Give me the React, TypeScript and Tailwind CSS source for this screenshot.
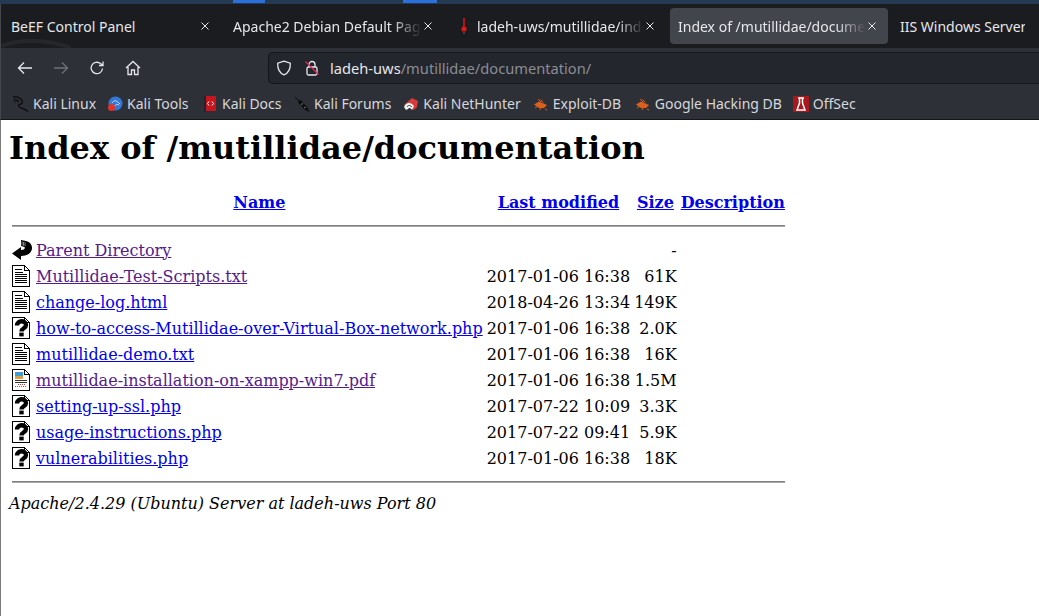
import React from "react";

const Tab = ({ title, icon, w, active, noClose, fade }: { title: string; icon?: React.ReactNode; w: string; active?: boolean; noClose?: boolean; fade?: boolean }) => (
  <div className={`${w} h-9 flex items-center rounded pl-2 pr-[11px] shrink-0 relative ${active ? "bg-[#43454c]" : ""}`}>
    {icon}
    <span className="text-[14px] text-[#e6e7ea] whitespace-nowrap overflow-hidden flex-1" style={fade ? { maskImage: "linear-gradient(to right, black 84%, transparent 100%)" } : undefined}>{title}</span>
    {!noClose && (
      <svg width="10" height="10" viewBox="0 0 10 10" className="shrink-0 ml-[1px]" stroke="#e6e7ea" strokeWidth="1"><path d="M1.500 1.500l7 7M8.500 1.500l-7 7" /></svg>
    )}
  </div>
);

const Bookmark = ({ label, icon, labelClass = "" }: { label: string; icon: React.ReactNode; labelClass?: string }) => (
  <div className="flex items-center gap-[4px] shrink-0">
    <span className="w-4 h-4 flex items-center justify-center">{icon}</span>
    <span className={`text-[14px] text-[#d6d7db] whitespace-nowrap ${labelClass}`}>{label}</span>
  </div>
);

const Dragon = () => (
  <svg width="16" height="16" viewBox="0 0 16 16" fill="none" stroke="#0c0c0c" strokeWidth="1.300"><path d="M0 1c3-.5 6 0 8 2 2 2 2 4.500 0 5-2 .5-3 1-2 2.500 1 1.500 5 2 9 5" /><path d="M1 3.500c2 0 3.500.5 5 2.500" /><path d="M0 5.500c1 0 2 .5 3 1.500" strokeWidth="0.800" /></svg>
);
const Bug = () => (
  <svg width="16" height="16" viewBox="0 0 16 16"><path d="M1 8.500l5-3 8 3.500-3 3H6z" fill="#d9601e" /><path d="M5 3l3 3M8 3.500l2 3M2 12l3-2M12 13l2 1M7 14l1-2" stroke="#d9601e" /></svg>
);
const Needle = () => (
  <svg width="16" height="16" viewBox="0 0 16 16" fill="none"><path d="M1 1l4 4" stroke="#0d0d0d" strokeWidth="1" /><path d="M5 5l8 8.500" stroke="#0d0d0d" strokeWidth="3.400" /><path d="M7 8.500l2-1M10 12l2-1" stroke="#999" strokeWidth="0.800" /><path d="M13 13.500l2 2" stroke="#0d0d0d" strokeWidth="1.500" /></svg>
);

const Page = ({ children }: { children?: React.ReactNode }) => (
  <svg width="20" height="22" viewBox="0 0 20 22" shapeRendering="crispEdges" className="block">
    <path d="M0.500 0.500H12.500L17.500 5.500V21.500H0.500Z" fill="#fff" stroke="#000" />
    <path d="M1 21H18M17 6V21" stroke="#000" strokeOpacity="0.600" />
    <path d="M12.500 0.500V5.500H17.500" fill="none" stroke="#000" />
    {children}
  </svg>
);
const TextIcon = () => (
  <Page>
    <path d="M3 4.500H10M3 7.500H11M3 9.500H15M3 11.500H15M3 13.500H15M3 15.500H15M3 17.500H15" stroke="#000" />
  </Page>
);
const QuestionIcon = () => (
  <svg width="20" height="22" viewBox="0 0 20 22" className="block">
    <path d="M0.500 0.500H12.500L17.500 5.500V21.500H0.500Z" fill="#fff" stroke="#000" shapeRendering="crispEdges" />
    <path d="M1 21H18M17 6V21" stroke="#000" strokeOpacity="0.600" shapeRendering="crispEdges" />
    <path d="M12.500 0.500V5.500H17.500" fill="none" stroke="#000" shapeRendering="crispEdges" />
    <path d="M5 8.500c0-5.500 9-5.500 9-.5 0 3.500-4.500 3-4.500 6.500" fill="none" stroke="#000" strokeWidth="4.400" />
    <rect x="7.300" y="15.600" width="4.400" height="3.800" fill="#000" />
  </svg>
);
const LayoutIcon = () => (
  <Page>
    <rect x="3" y="3" width="8" height="4" fill="#3f9ad8" />
    <rect x="3" y="7" width="8" height="3" fill="#e0a040" />
    <path d="M3 11.500H15M3 13.500H15" stroke="#333" />
    <path d="M6 15.500H14M3 17.500H14" stroke="#d04040" strokeDasharray="1 1" />
  </Page>
);
const BackIcon = () => (
  <svg width="20" height="22" viewBox="0 0 20 22" className="block">
    <path d="M0 14.500L9 8v3C12 11 13.500 10 12.500 8L9 7V1l5 1c4 1 6 4 6 7 0 5-5 8-11 8v4z" fill="#000" />
    <path d="M10 2.500v4M11.500 2.800v4M13 3.200v4" stroke="#aaa" strokeWidth="0.800" />
  </svg>
);

type Row = { icon: React.ReactNode; name: string; date: string; size: string; visited?: boolean };
const rows: Row[] = [
  { icon: <BackIcon />, name: "Parent Directory", date: "", size: "-", visited: true },
  { icon: <TextIcon />, name: "Mutillidae-Test-Scripts.txt", date: "2017-01-06 16:38", size: "61K", visited: true },
  { icon: <TextIcon />, name: "change-log.html", date: "2018-04-26 13:34", size: "149K" },
  { icon: <QuestionIcon />, name: "how-to-access-Mutillidae-over-Virtual-Box-network.php", date: "2017-01-06 16:38", size: "2.0K" },
  { icon: <TextIcon />, name: "mutillidae-demo.txt", date: "2017-01-06 16:38", size: "16K" },
  { icon: <LayoutIcon />, name: "mutillidae-installation-on-xampp-win7.pdf", date: "2017-01-06 16:38", size: "1.5M", visited: true },
  { icon: <QuestionIcon />, name: "setting-up-ssl.php", date: "2017-07-22 10:09", size: "3.3K" },
  { icon: <QuestionIcon />, name: "usage-instructions.php", date: "2017-07-22 09:41", size: "5.9K" },
  { icon: <QuestionIcon />, name: "vulnerabilities.php", date: "2017-01-06 16:38", size: "18K" },
];

const link = "text-[#0000ee] underline";
const visitedLink = "text-[#551a8b] underline";

export default function App() {
  return (
    <div className="w-[1039px] h-[616px] overflow-hidden flex flex-col bg-white" style={{ fontFamily: '"Noto Sans", sans-serif' }}>
      <div className="h-[4px] bg-[#243a52] relative shrink-0">
        <div className="absolute left-[233px] top-0 w-[32px] h-[3px] bg-[#2a6fdc]" />
        <div className="absolute left-[403px] top-0 w-[34px] h-[3px] bg-[#2a6fdc]" />
      </div>
      <div className="h-[44px] bg-[#1b1c20] border-l border-[#45474c] flex items-center pl-[2px] gap-[4px] shrink-0 overflow-hidden relative">
        <svg width="130" height="44" viewBox="0 0 130 44" className="absolute left-0 top-0" fill="none" stroke="#26272c" strokeWidth="4"><path d="M0 42C20 34 50 36 70 44" /></svg>
        <Tab w="w-[218px]" title="BeEF Control Panel" />
        <Tab w="w-[219px]" title="Apache2 Debian Default Page: It works" fade />
        <Tab w="w-[218px]" fade title="ladeh-uws/mutillidae/index.php" icon={
          <svg width="16" height="16" viewBox="0 0 16 16" className="shrink-0 mr-[5px]"><path d="M8 0v10" stroke="#a81818" strokeWidth="2" /><circle cx="8" cy="11" r="2.600" fill="#e01515" /><path d="M7 15h2" stroke="#666" /></svg>
        } />
        <Tab w="w-[218px]" active fade title="Index of /mutillidae/documentation" />
        <Tab w="w-[144px]" noClose title="IIS Windows Server" />
      </div>
      <div className="h-[40px] bg-[#2e3038] border-l border-[#45474c] flex items-center shrink-0">
        <div className="w-[267px] flex items-center pl-[16px] gap-[20px]">
          <svg width="16" height="16" viewBox="0 0 16 16" fill="none" stroke="#e6e7ea" strokeWidth="1.300"><path d="M15 8H1.500M7 2.500L1.500 8 7 13.500" /></svg>
          <svg width="16" height="16" viewBox="0 0 16 16" fill="none" stroke="#6f7177" strokeWidth="1.300"><path d="M1 8h13.500M9 2.500L14.500 8 9 13.500" /></svg>
          <svg width="16" height="16" viewBox="0 0 16 16" fill="none" stroke="#e6e7ea" strokeWidth="1.300"><path d="M13.500 8.500A5.700 5.700 0 1 1 11.500 3.600L14 5.500M14 1.500v4h-4" /></svg>
          <svg width="16" height="16" viewBox="0 0 16 16" fill="none" stroke="#e6e7ea" strokeWidth="1.300"><path d="M1 8l7-6.500L15 8M3 7v7.500h3.500V10h3v4.500H13V7" /></svg>
        </div>
        <div className="flex-1 h-[32px] bg-[#24262e] border border-[#15161a] rounded-l-[5px] border-r-0 flex items-center pl-[7px]">
          <svg width="16" height="16" viewBox="0 0 16 16" fill="none" stroke="#e6e7ea" strokeWidth="1.300"><path d="M8 1.200l6.300 2c.2 5.800-1.800 9.800-6.300 11.600C3.500 13 1.500 9 1.700 3.200z" /></svg>
          <svg width="16" height="16" viewBox="0 0 16 16" fill="none" stroke="#e6e7ea" strokeWidth="1.300" className="ml-[12px]"><rect x="3" y="7" width="10" height="8" rx="1.500" /><path d="M5 7V4.500a3 3 0 0 1 6 0V7" /><path d="M1.500 1.500l13 13" stroke="#e22850" /></svg>
          <span className="ml-[10px] text-[14.670px] text-[#e6e7ea] whitespace-nowrap">ladeh-uws<span className="text-[#8b8d93]">/mutillidae/documentation/</span></span>
        </div>
      </div>
      <div className="h-[32px] bg-[#2e3038] border-l border-l-[#45474c] border-b border-b-[#15161a] flex items-center pl-[12px] gap-[12px] shrink-0 overflow-hidden">
        <Bookmark label="Kali Linux" labelClass="w-[62px]" icon={<Dragon />} />
        <Bookmark label="Kali Tools" labelClass="w-[63px]" icon={
          <svg width="16" height="16" viewBox="0 0 16 16"><circle cx="8.500" cy="7.500" r="7" fill="#3577d4" /><path d="M5 7c2-3 4-3 8 1M8 10c1-2 2-2 4-1" stroke="#cde" fill="none" /><circle cx="4.500" cy="11.500" r="3.500" fill="#e3322a" /></svg>
        } />
        <Bookmark label="Kali Docs" labelClass="w-[60px]" icon={
          <svg width="16" height="16" viewBox="0 0 16 16"><rect x="2" y="0" width="12" height="15" fill="#c4161c" /><rect x="2" y="0" width="2" height="16" fill="#223" /><path d="M7 5.500L5.500 7.500 7 9.500M10 5.500l1.500 2L10 9.500" stroke="#fff" fill="none" /></svg>
        } />
        <Bookmark label="Kali Forums" icon={<Needle />} />
        <Bookmark label="Kali NetHunter" icon={
          <svg width="16" height="16" viewBox="0 0 16 16"><path d="M1 9l8-7 6 3-1 6-3 3z" fill="#d63a3a" /><path d="M1 11c2-5 7-5 10-1l-2 4c-1-2-3-3-4-1l-2 1z" fill="#f1f1f1" /><path d="M4 11c1-2 3-2 5 0" stroke="#333" fill="none" /></svg>
        } />
        <Bookmark label="Exploit-DB" labelClass="w-[70px]" icon={<Bug />} />
        <Bookmark label="Google Hacking DB" labelClass="w-[126px]" icon={<Bug />} />
        <Bookmark label="OffSec" icon={
          <svg width="16" height="16" viewBox="0 0 16 16"><rect width="16" height="16" fill="#a8181c" /><path d="M5 2h6M6.500 2v5L4 14h8L9.500 7V2" stroke="#fff" strokeWidth="1.500" fill="none" /></svg>
        } />
      </div>
      <div className="flex-1 border-l border-[#7a7a7a] pl-[8px] pt-[8px] text-black text-[16px] leading-[19px] overflow-hidden" style={{ fontFamily: '"DejaVu Serif", serif' }}>
        <h1 className="text-[32px] leading-[38px] font-bold mt-[1px] mb-[20px] whitespace-nowrap">Index of /mutillidae/documentation</h1>
        <table className="border-separate border-spacing-[2px]">
          <thead>
            <tr className="h-[26px]">
              <th className="p-[1px]" />
              <th className={`p-[1px] font-bold ${link}`}>Name</th>
              <th className={`p-[1px] font-bold ${link}`}>Last modified</th>
              <th className={`p-[1px] font-bold ${link}`}>Size</th>
              <th className={`p-[1px] font-bold ${link}`}>Description</th>
            </tr>
            <tr>
              <th colSpan={5} className="p-[1px]"><div className="h-[2px] bg-[#808080] border-b border-[#aaa] mt-[7px] mb-[8px]" /></th>
            </tr>
          </thead>
          <tbody>
            {rows.map((r) => (
              <tr key={r.name} className="h-[24px]">
                <td className="p-[1px] align-top">{r.icon}</td>
                <td className="p-[1px]"><span className={r.visited ? visitedLink : link}>{r.name}</span></td>
                <td className="p-[1px] text-right whitespace-nowrap">{r.date}</td>
                <td className="p-[1px] text-right">{r.size}</td>
                <td className="p-[1px]" />
              </tr>
            ))}
            <tr>
              <th colSpan={5} className="p-[1px]"><div className="h-[2px] bg-[#808080] border-b border-[#aaa] mt-[8px] mb-[2px]" /></th>
            </tr>
          </tbody>
        </table>
        <div className="italic mt-[6px]">Apache/2.4.29 (Ubuntu) Server at ladeh-uws Port 80</div>
      </div>
    </div>
  );
}
